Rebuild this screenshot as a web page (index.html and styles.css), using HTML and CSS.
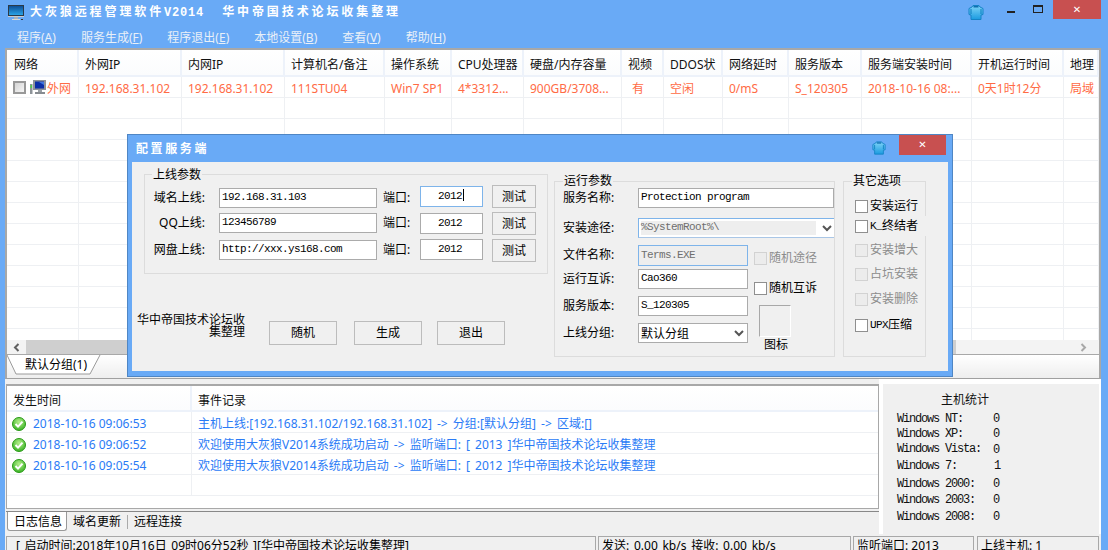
FILE: index.html
```html
<!DOCTYPE html>
<html lang="zh-CN">
<head>
<meta charset="utf-8">
<title>大灰狼远程管理软件V2014</title>
<link rel="stylesheet" href="styles.css">
</head>
<body>
<svg class="defs" width="0" height="0" aria-hidden="true">
  <defs>
    <linearGradient id="gShirt" x1="0" y1="0" x2="0" y2="1"><stop offset="0" stop-color="#7fd4f7"/><stop offset="1" stop-color="#1b9be0"/></linearGradient>
    <linearGradient id="gScreen" x1="0" y1="0" x2="0" y2="1"><stop offset="0" stop-color="#0d4f96"/><stop offset="1" stop-color="#2aa3e6"/></linearGradient>
    <radialGradient id="gOk" cx="0.5" cy="0.35" r="0.7"><stop offset="0" stop-color="#b6f08c"/><stop offset="1" stop-color="#2fae1c"/></radialGradient>
    <symbol id="shirt" viewBox="0 0 16 17">
      <path d="M5 1.5h6l1 1.5 3 1.5v6l-2 .5v4.5H3V11l-2-.5v-6L4 3z" fill="url(#gShirt)" stroke="#1583c6"/>
      <path d="M5.5 2h5v1.5h-5z" fill="#0f6fb0"/>
      <path d="M3 5v5M13 5v5" stroke="#0f7fc0" fill="none"/>
    </symbol>
    <symbol id="ok" viewBox="0 0 14 14">
      <circle cx="7" cy="7" r="6.5" fill="url(#gOk)" stroke="#2a9a18"/>
      <path d="M3.5 7l2.5 2.6 4.5-5" fill="none" stroke="#fff" stroke-width="2"/>
    </symbol>
  </defs>
</svg>
<div class="app">
  <header class="titlebar">
    <svg class="app-icon" width="16" height="16" viewBox="0 0 16 16" aria-hidden="true">
      <rect x="0" y="0" width="16" height="11" fill="#2b3a48"/>
      <rect x="1" y="1" width="14" height="9" fill="url(#gScreen)"/>
      <rect x="0" y="11" width="16" height="1" fill="#c7ccd0"/>
      <rect x="6" y="12" width="4" height="2" fill="#aab0b5"/>
      <rect x="4" y="14" width="8" height="1" fill="#d5d8da"/>
      <rect x="13" y="14" width="2" height="1" fill="#333"/>
    </svg>
    <h1 class="title">大灰狼远程管理软件<span class="title-latin">V2014</span><span class="title-cn">华中帝国技术论坛收集整理</span></h1>
    <svg class="skin" width="16" height="17" aria-hidden="true"><use href="#shirt"/></svg>
    <span class="win-min"></span>
    <span class="win-max"></span>
    <span class="win-close">✕</span>
  </header>
  <nav class="menubar">
    <span>程序(<u>A</u>)</span>
    <span>服务生成(<u>F</u>)</span>
    <span>程序退出(<u>E</u>)</span>
    <span>本地设置(<u>B</u>)</span>
    <span>查看(<u>V</u>)</span>
    <span>帮助(<u>H</u>)</span>
  </nav>
  <div class="frame">
    <section class="list-panel">
      <div class="grid-row head">
        <div>网络</div><div>外网IP</div><div>内网IP</div><div>计算机名/备注</div><div>操作系统</div><div>CPU处理器</div><div>硬盘/内存容量</div><div>视频</div><div>DDOS状</div><div>网络延时</div><div>服务版本</div><div>服务端安装时间</div><div>开机运行时间</div><div>地理</div>
      </div>
      <div class="rows">
        <div class="grid-row data">
          <div class="net-cell">
            <span class="row-check"></span>
            <svg width="16" height="16" viewBox="0 0 16 16" aria-hidden="true">
              <rect x="3" y="1" width="13" height="10" fill="#8d9399"/>
              <rect x="5" y="2.500" width="9" height="7" fill="#0b2fa8"/>
              <path d="M9 3h5v3z" fill="#3f77e0"/>
              <rect x="8" y="11" width="4" height="2" fill="#9aa0a5"/>
              <rect x="5" y="13" width="10" height="2" fill="#878c91"/>
              <rect x="0" y="5" width="2.500" height="10" fill="#8d9399"/>
              <rect x="0.500" y="6" width="1.500" height="3" fill="#4fd04a"/>
            </svg>
            <span class="net-text">外网</span>
          </div>
          <div>192.168.31.102</div><div>192.168.31.102</div><div>111STU04</div><div>Win7 SP1</div><div>4*3312...</div><div>900GB/3708...</div><div class="video">有</div><div>空闲</div><div>0/mS</div><div>S_120305</div><div>2018-10-16 08:...</div><div>0天1时12分</div><div>局域</div>
        </div>
        <div class="grid-row blank"><div></div><div></div><div></div><div></div><div></div><div></div><div></div><div></div><div></div><div></div><div></div><div></div><div></div><div></div></div>
        <div class="grid-row blank"><div></div><div></div><div></div><div></div><div></div><div></div><div></div><div></div><div></div><div></div><div></div><div></div><div></div><div></div></div>
        <div class="grid-row blank"><div></div><div></div><div></div><div></div><div></div><div></div><div></div><div></div><div></div><div></div><div></div><div></div><div></div><div></div></div>
        <div class="grid-row blank"><div></div><div></div><div></div><div></div><div></div><div></div><div></div><div></div><div></div><div></div><div></div><div></div><div></div><div></div></div>
        <div class="grid-row blank"><div></div><div></div><div></div><div></div><div></div><div></div><div></div><div></div><div></div><div></div><div></div><div></div><div></div><div></div></div>
        <div class="grid-row blank"><div></div><div></div><div></div><div></div><div></div><div></div><div></div><div></div><div></div><div></div><div></div><div></div><div></div><div></div></div>
        <div class="grid-row blank"><div></div><div></div><div></div><div></div><div></div><div></div><div></div><div></div><div></div><div></div><div></div><div></div><div></div><div></div></div>
        <div class="grid-row blank"><div></div><div></div><div></div><div></div><div></div><div></div><div></div><div></div><div></div><div></div><div></div><div></div><div></div><div></div></div>
        <div class="grid-row blank"><div></div><div></div><div></div><div></div><div></div><div></div><div></div><div></div><div></div><div></div><div></div><div></div><div></div><div></div></div>
        <div class="grid-row blank"><div></div><div></div><div></div><div></div><div></div><div></div><div></div><div></div><div></div><div></div><div></div><div></div><div></div><div></div></div>
        <div class="grid-row blank"><div></div><div></div><div></div><div></div><div></div><div></div><div></div><div></div><div></div><div></div><div></div><div></div><div></div><div></div></div>
        <div class="grid-row blank"><div></div><div></div><div></div><div></div><div></div><div></div><div></div><div></div><div></div><div></div><div></div><div></div><div></div><div></div></div>
      </div>
      <div class="scrollbar">
        <span class="sb-btn"><svg width="7" height="9" viewBox="0 0 7 9" aria-hidden="true"><path d="M5.500 1L2 4.500 5.500 8" fill="none" stroke="#606060" stroke-width="2"/></svg></span>
        <span class="sb-thumb"></span>
        <span class="sb-btn right"><svg width="7" height="9" viewBox="0 0 7 9" aria-hidden="true"><path d="M1.500 1L5 4.500 1.500 8" fill="none" stroke="#a8a8a8" stroke-width="2"/></svg></span>
      </div>
      <div class="tabstrip">
        <div class="group-tab">
          <svg class="group-tab-bg" width="94" height="20" viewBox="0 0 94 20" aria-hidden="true"><path d="M0 0L9 19H83L93 0" fill="#fff" stroke="#9a9a9a"/></svg>
          <span class="group-tab-text">默认分组(1)</span>
        </div>
      </div>
    </section>
    <div class="lower">
      <div class="lower-left">
        <section class="log">
          <div class="log-row log-head"><div>发生时间</div><div>事件记录</div></div>
          <div class="log-row">
            <div class="log-time"><svg width="14" height="14" aria-hidden="true"><use href="#ok"/></svg>2018-10-16 09:06:53</div>
            <div class="log-msg">主机上线:[192.168.31.102/192.168.31.102] -&gt; 分组:[默认分组] -&gt; 区域:[]</div>
          </div>
          <div class="log-row">
            <div class="log-time"><svg width="14" height="14" aria-hidden="true"><use href="#ok"/></svg>2018-10-16 09:06:52</div>
            <div class="log-msg">欢迎使用大灰狼V2014系统成功启动 -&gt; 监听端口: [ 2013 ]华中帝国技术论坛收集整理</div>
          </div>
          <div class="log-row">
            <div class="log-time"><svg width="14" height="14" aria-hidden="true"><use href="#ok"/></svg>2018-10-16 09:05:54</div>
            <div class="log-msg">欢迎使用大灰狼V2014系统成功启动 -&gt; 监听端口: [ 2012 ]华中帝国技术论坛收集整理</div>
          </div>
          <div class="log-row"><div></div><div></div></div>
        </section>
        <div class="log-tabs">
          <span class="log-tab active">日志信息</span>
          <span class="log-tab">域名更新</span>
          <span class="log-tab sep">远程连接</span>
        </div>
      </div>
      <aside class="stats">
        <h2 class="stats-title">主机统计</h2>
        <div class="stat s1"><span>Windows NT:</span><span>0</span></div>
        <div class="stat s2"><span>Windows XP:</span><span>0</span></div>
        <div class="stat s3"><span>Windows Vista:</span><span>0</span></div>
        <div class="stat s4"><span>Windows 7:</span><span>1</span></div>
        <div class="stat s5"><span>Windows 2000:</span><span>0</span></div>
        <div class="stat s6"><span>Windows 2003:</span><span>0</span></div>
        <div class="stat s7"><span>Windows 2008:</span><span>0</span></div>
      </aside>
    </div>
    <footer class="status">
      <div class="st1">[ 启动时间:2018年10月16日 09时06分52秒 ][华中帝国技术论坛收集整理]</div>
      <div class="st2">发送: 0.00 kb/s 接收: 0.00 kb/s</div>
      <div class="st3">监听端口: 2013</div>
      <div class="st4">上线主机: 1</div>
    </footer>
  </div>

  <section class="dialog">
    <header class="dlg-title">
      <span class="dlg-title-text">配置服务端</span>
      <svg class="dlg-skin" width="14" height="16" aria-hidden="true"><use href="#shirt"/></svg>
      <span class="dlg-close">✕</span>
    </header>
    <div class="dlg-body">
      <div class="dlg-left">
        <div class="group online">
          <span class="legend">上线参数</span>
          <div class="online-grid">
            <div class="lb m3">域名上线:</div><div class="field m3 mono">192.168.31.103</div><div class="lb-port m3">端口:</div><div class="field port focus mono m1">2012<i class="caret"></i></div><div class="btn">测试</div>
            <div class="lb m1">QQ上线:</div><div class="field m1 mono">123456789</div><div class="lb-port m1">端口:</div><div class="field port mono m1">2012</div><div class="btn">测试</div>
            <div class="lb m1">网盘上线:</div><div class="field m1 mono">http://xxx.ys168.com</div><div class="lb-port m1">端口:</div><div class="field port mono">2012</div><div class="btn">测试</div>
          </div>
        </div>
        <div class="dlg-actions">
          <p class="credit">华中帝国技术论坛收集整理</p>
          <div class="btn big b1">随机</div>
          <div class="btn big b2">生成</div>
          <div class="btn big b3">退出</div>
        </div>
      </div>
      <div class="group run">
        <span class="legend">运行参数</span>
        <div class="run-grid">
          <div class="rl">服务名称:</div><div class="field mono wide">Protection program</div>
          <div class="rl">安装途径:</div>
          <div class="field select-path mono wide"><span class="path-val">%SystemRoot%\</span><svg width="10" height="8" viewBox="0 0 10 8" aria-hidden="true"><path d="M1 2l4 4 4-4" fill="none" stroke="#555" stroke-width="2"/></svg></div>
          <div class="rl">文件名称:</div><div class="field disabled focus mono tall">Terms.EXE</div><label class="chk off c-path"><i></i>随机途径</label>
          <div class="rl">运行互诉:</div><div class="field mono">Cao360</div><label class="chk c-mutex"><i></i>随机互诉</label>
          <div class="rl">服务版本:</div><div class="field mono">S_120305</div>
          <div class="icon-col"><div class="icon-box"></div><div class="icon-label">图标</div></div>
          <div class="rl">上线分组:</div>
          <div class="field select-group"><span>默认分组</span><svg width="10" height="8" viewBox="0 0 10 8" aria-hidden="true"><path d="M1 2l4 4 4-4" fill="none" stroke="#555" stroke-width="2"/></svg></div>
        </div>
      </div>
      <div class="group other">
        <span class="legend">其它选项</span>
        <div class="other-grid">
          <label class="chk"><i></i>安装运行</label>
          <label class="chk cover"><i></i><span class="mono-k">K_</span>终结者</label>
          <label class="chk off"><i></i>安装增大</label>
          <label class="chk off"><i></i>占坑安装</label>
          <label class="chk off"><i></i>安装删除</label>
          <label class="chk"><i></i><span class="mono-k">UPX</span>压缩</label>
        </div>
      </div>
    </div>
  </section>
</div>
</body>
</html>
```
FILE: styles.css
```css
* { box-sizing: border-box; }
html, body { margin: 0; padding: 0; }
body { width: 1108px; height: 550px; overflow: hidden; font: 12px/18px "Noto Sans", "Noto Sans CJK SC", sans-serif; color: #000; }
.defs { position: absolute; }
.app { position: relative; width: 1108px; height: 550px; background: #69aaf6; display: flex; flex-direction: column; overflow: hidden; }

/* title */
.titlebar { height: 26px; display: flex; align-items: flex-start; flex: none; padding-left: 8px; }
.app-icon { margin-top: 5px; }
.title { margin: 1px 0 0 6px; font: bold 12px/20px "Noto Sans CJK SC", sans-serif; letter-spacing: 2.9px; color: #fff; white-space: nowrap; }
.title-latin { font: bold 12px/20px "Liberation Mono", monospace; letter-spacing: 0.8px; }
.title-cn { margin-left: 18px; }
.skin { margin: 4px 0 0 auto; }
.win-min { width: 8px; height: 2px; background: #222; margin: 11px 0 0 23px; }
.win-max { width: 10px; height: 8px; border: 1px solid #222; border-top-width: 2px; margin: 5px 0 0 18px; }
.win-close { width: 48px; height: 19px; background: #c85050; color: #fff; margin: 0 7px 0 10px; text-align: center; font: bold 10px/19px "DejaVu Sans", sans-serif; }

.menubar { height: 22px; flex: none; display: flex; gap: 25px; padding-left: 17px; color: #e9f0f8; line-height: 24px; white-space: nowrap; }
.menubar u { text-underline-offset: 1px; }

.frame { flex: 1; margin: 0 7px 0 5px; background: #f0f0f0; display: flex; flex-direction: column; min-height: 0; }

/* host list */
.list-panel { height: 331px; flex: none; border-top: 2px solid #a8a8a8; border-left: 2px solid #a8a8a8; border-right: 2px solid #a8a8a8; background: #fff; display: flex; flex-direction: column; border-bottom: 1px solid #a0a0a0; }
.grid-row { display: grid; grid-template-columns: 72px 103px 103px 100px 67px 72px 98px 42px 59px 66px 73px 110px 92px 1fr; }
.grid-row > div { padding-left: 6px; white-space: nowrap; overflow: hidden; }
.head { height: 27px; flex: none; background: linear-gradient(#fff, #fbfcfd); border-bottom: 2px solid #edf2fa; line-height: 29px; color: #111; }
.head > div { border-right: 2px solid #edf2fa; }
.head > div:first-child { padding-left: 7px; }
.rows { flex: 1; overflow: hidden; min-height: 0; }
.data, .blank { height: 21px; border-bottom: 1px solid #eef0f3; }
.data { color: #ff6b45; line-height: 24px; }
.data > div, .blank > div { border-right: 1px solid #eef0f3; }
.data > div.video { padding-left: 10px; }
.net-cell { display: flex; align-items: center; padding-left: 6px !important; }
.row-check { width: 13px; height: 13px; border: 2px solid #999; background: linear-gradient(135deg, #d5d5d5, #f5f5f5); flex: none; }
.net-cell svg { margin-left: 4px; flex: none; }
.net-text { margin: 4px 0 0 1px; }

.scrollbar { height: 15px; flex: none; display: flex; background: #f3f3f3; border-bottom: 1px solid #a8a8a8; }
.sb-btn { width: 19px; display: flex; align-items: center; justify-content: center; }
.sb-btn.right { margin-left: auto; margin-right: 6px; }
.sb-thumb { width: 930px; background: #cfcfcf; }
.tabstrip { height: 23px; flex: none; background: linear-gradient(#fff, #eee); }
.group-tab { position: relative; width: 94px; height: 20px; }
.group-tab-bg { position: absolute; left: 0; top: 0; }
.group-tab-text { position: absolute; left: 18px; top: 1px; white-space: nowrap; }

/* lower */
.lower { height: 155px; flex: none; display: flex; background: #fff; padding-top: 5px; }
.lower-left { width: 874px; padding-left: 1px; display: flex; flex-direction: column; background: #f0f0f0; margin-top: -5px; padding-top: 5px; background-clip: padding-box; }
.log { height: 125px; flex: none; border: 1px solid #a8a8a8; border-top-width: 2px; background: #fff; overflow: hidden; color: #2a7bf6; }
.log-row { display: grid; grid-template-columns: 185px 1fr; height: 21px; border-bottom: 1px solid #eef0f3; line-height: 24px; white-space: nowrap; }
.log-row > div { padding-left: 6px; border-right: 1px solid #eef0f3; overflow: hidden; }
.log-row > div:last-child { border-right: 0; }
.log-head { height: 26px; color: #111; line-height: 29px; border-bottom: 2px solid #edf2fa; background: linear-gradient(#fff, #fbfcfd); }
.log-head > div { border-right: 2px solid #edf2fa; }
.log-time { display: flex; align-items: center; padding: 3px 0 0 5px !important; line-height: 18px; }
.log-time svg { margin-right: 7px; flex: none; }
.log-msg { word-spacing: 2px; }
.log-tabs { height: 20px; margin-top: 2px; border-top: 1px solid #888; display: flex; padding-left: 1px; flex: none; line-height: 19px; }
.log-tab { padding: 0 6px; white-space: nowrap; height: 19px; }
.log-tab.active { width: 60px; background: #fff; border: 1px solid #999; border-top: 0; border-radius: 0 0 3px 3px; padding: 0 0 0 6px; }
.log-tab.sep { position: relative; padding-left: 6px; border-left: 1px solid #aaa; height: 14px; margin-top: 3px; line-height: 13px; }

.stats { width: 216px; margin-left: 4px; background: #f0f0f0; padding: 6px 0 0 14px; font: 12px/14px "Liberation Mono", monospace; letter-spacing: -1.2px; color: #111; }
.stats-title { margin: 0 0 0 44px; font: 12px/17px "Noto Sans CJK SC", sans-serif; letter-spacing: 0; height: 17px; }
.stat { display: grid; grid-template-columns: 96px 1fr; white-space: nowrap; height: 14px; }
.s1 { margin-top: 5px; }
.s2, .s3 { margin-top: 1px; }
.s4 { margin-top: 3px; }
.s5 { margin-top: 4px; }
.s6 { margin-top: 2px; }
.s7 { margin-top: 3px; }
.s3 span:last-child { position: relative; top: 1px; }
.s4 span:last-child { padding-left: 1px; }

.status { flex: 1; display: flex; gap: 2px; padding: 2px 0 0 1px; overflow: hidden; min-height: 0; }
.status > div { border: 1px solid #a8a8a8; border-bottom: 0; height: 18px; padding-left: 9px; white-space: nowrap; line-height: 17px; overflow: hidden; }
.st1 { width: 590px; word-spacing: 1.5px; }
.st2 { width: 253px; padding-left: 3px !important; word-spacing: 1.6px; }
.st3 { width: 121px; padding-left: 3px !important; }
.st4 { width: 122px; padding-left: 3px !important; margin-left: 1px; }

/* dialog */
.dialog { position: absolute; left: 127px; top: 134px; width: 826px; height: 243px; border: 1px solid #4f86c4; background: #69aaf6; padding: 0 4px 5px; display: flex; flex-direction: column; }
.dlg-title { height: 27px; flex: none; display: flex; align-items: flex-start; color: #fff; }
.dlg-title-text { margin: 3px 0 0 4px; font: bold 12px/20px "Noto Sans CJK SC", sans-serif; letter-spacing: 2.6px; white-space: nowrap; }
.dlg-skin { margin: 5px 0 0 auto; }
.dlg-close { width: 47px; height: 20px; background: #c85050; margin-left: 13px; margin-right: 2px; text-align: center; font: bold 10px/20px "DejaVu Sans", sans-serif; }
.dlg-body { flex: 1; background: #f0f0f0; display: flex; align-items: flex-start; min-height: 0; }
.dlg-left { width: 416px; margin-top: 12px; margin-right: 6px; flex: none; padding-left: 5px; }
.group { position: relative; border: 1px solid #dcdcdc; }
.legend { position: absolute; left: 8px; top: -10px; background: #f0f0f0; padding: 0 1px; line-height: 18px; white-space: nowrap; }
.online .legend { left: 7px; top: -9px; }
.online { width: 404px; height: 100px; margin-left: 7px; padding-top: 10px; }
.online-grid { display: grid; grid-template-columns: 74px 158px 43px 63px 53px; grid-auto-rows: 23px; row-gap: 4px; }
.online-grid > .btn { width: 44px; margin-left: 9px; }
.lb { width: 60px; text-align: right; white-space: nowrap; height: 20px; line-height: 20px; }
.lb-port { padding-left: 6px; white-space: nowrap; height: 20px; line-height: 20px; }
.m1 { margin-top: 1px; }
.m3 { margin-top: 3px; }
.field { height: 20px; background: #fff; border: 1px solid #ababab; padding-left: 2px; line-height: 17px; white-space: nowrap; overflow: hidden; }
.mono { font-family: "Liberation Mono", monospace; font-size: 11px; letter-spacing: -0.6px; }
.port { height: 21px; padding-left: 17px; line-height: 18px; }
.focus { border-color: #7eb4ea; }
.caret { display: inline-block; width: 1px; height: 12px; background: #000; vertical-align: -2px; margin-left: 1px; }
.btn { border: 1px solid #bcbcbc; background: #f0f0f0; display: flex; align-items: center; justify-content: center; height: 23px; white-space: nowrap; }
.dlg-actions { display: flex; align-items: flex-start; margin-top: 40px; }
.credit { width: 108px; margin: 0; font-size: 12px; line-height: 12px; text-align: right; flex: none; }
.btn.big { width: 68px; height: 24px; margin-top: 7px; }
.b1 { margin-left: 24px; }
.b2 { margin-left: 17px; }
.b3 { margin-left: 15px; }

.run { width: 281px; height: 176px; margin: 19px 8px 0 0; padding-top: 6px; flex: none; }
.run-grid { display: grid; grid-template-columns: 83px 110px 1fr; grid-template-rows: 30px 27px 24px 27px 27px 20px; }
.rl { padding-left: 8px; white-space: nowrap; height: 20px; line-height: 20px; }
.wide { grid-column: 2 / 4; }
.select-path { height: 20px; border-color: #7eb4ea; border-right: 0; border-bottom-color: #a9c6e6; display: flex; align-items: center; padding: 2px 0 2px 2px; color: #6f6f6f; }
.path-val { width: 175px; height: 14px; background: #eee; line-height: 13px; flex: none; }
.select-path svg { margin-left: 6px; }
.disabled { background: #eeeeee; color: #6f6f6f; }
.tall { height: 21px; line-height: 18px; }
.select-group { display: flex; align-items: center; justify-content: space-between; padding-right: 3px; height: 20px; }
.chk { display: flex; align-items: center; white-space: nowrap; height: 14px; }
.chk i { width: 13px; height: 13px; background: #fff; border: 1px solid #8f8f8f; flex: none; margin-right: 2px; }
.chk.off { color: #8c8c8c; }
.chk.off i { background: #ececec; border-color: #d2d2d2; }
.c-path { margin: 6px 0 0 6px; }
.c-mutex { margin: 12px 0 0 6px; }
.icon-col { grid-row: 5 / 7; grid-column: 3; margin: 9px 0 0 11px; }
.icon-box { width: 32px; height: 32px; border: 1px solid; border-color: #a8a8a8 #fff #fff #a8a8a8; }
.icon-label { margin: -1px 0 0 5px; height: 18px; }

.other { width: 83px; height: 176px; margin-top: 19px; flex: none; padding: 14px 0 0 11px; }
.other-grid { display: grid; grid-template-rows: 20px 24px 24px 25px 26px 20px; }
.other-grid .chk { height: 20px; }
.chk.cover { background: #f0f0f0; margin-right: -1px; }
.mono-k { font: 11px/18px "Liberation Mono", monospace; letter-spacing: -0.6px; }
```
